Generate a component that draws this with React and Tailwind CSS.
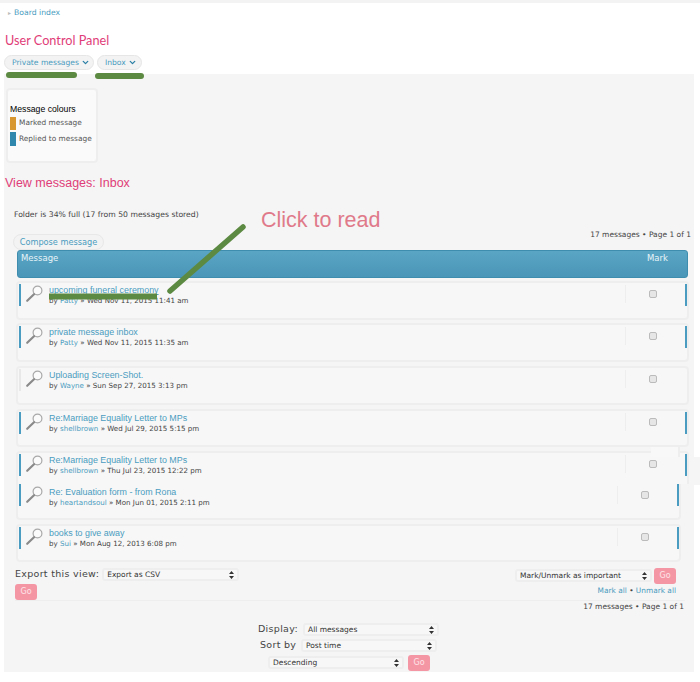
import { ChevronDown } from 'lucide-react';

const rows = [
  { title: 'upcoming funeral ceremony', by: 'Patty', date: 'Wed Nov 11, 2015 11:41 am', gap: 'mt-[3px]', h: 'h-[39px]', underline: true },
  { title: 'private message inbox', by: 'Patty', date: 'Wed Nov 11, 2015 11:35 am', gap: 'mt-[3px]', h: 'h-[39px]' },
  { title: 'Uploading Screen-Shot.', by: 'Wayne', date: 'Sun Sep 27, 2015 3:13 pm', gap: 'mt-[4px]', h: 'h-[39px]', noBar: true },
  { title: 'Re:Marriage Equality Letter to MPs', by: 'shellbrown', date: 'Wed Jul 29, 2015 5:15 pm', gap: 'mt-[4px]', h: 'h-[38px]' },
  { title: 'Re:Marriage Equality Letter to MPs', by: 'shellbrown', date: 'Thu Jul 23, 2015 12:22 pm', gap: 'mt-[4px]', h: 'h-[33px]', cut: true },
  { title: 'Re: Evaluation form - from Rona', by: 'heartandsoul', date: 'Mon Jun 01, 2015 2:11 pm', gap: 'mt-0', h: 'h-[36px]', narrow: true, top: true },
  { title: 'books to give away', by: 'Sui', date: 'Mon Aug 12, 2013 6:08 pm', gap: 'mt-[4px]', h: 'h-[38px]', narrow: true },
];

function Magnifier() {
  return (
    <svg width="20" height="20" viewBox="0 0 20 20" className="shrink-0" aria-hidden>
      <circle cx="12.5" cy="5.5" r="4.4" fill="#fbfbfb" stroke="#a8a8a8" strokeWidth="1.2" />
      <path d="M9 9.2 2.2 15.8" stroke="#8a8a8a" strokeWidth="2.2" strokeLinecap="round" />
    </svg>
  );
}

function Select({ label, className }) {
  return (
    <div className={`flex items-center justify-between h-[13px] pl-[3px] pr-[3px] rounded-[3px] border-2 border-[#eeeeee] bg-[#f7f7f7] text-[7.5px] leading-none text-[#333] ${className}`}>
      <span>{label}</span>
      <svg width="5" height="8" viewBox="0 0 5 8" aria-hidden>
        <path d="M2.5 0 5 3H0ZM2.5 8 0 5h5Z" fill="#333" />
      </svg>
    </div>
  );
}

function Go({ className }) {
  return (
    <div className={`flex items-center justify-center w-[22px] h-[16px] rounded-[3px] bg-[#f596a5] text-[8px] text-[#fde4e8] ${className}`}>Go</div>
  );
}

function Row({ row }) {
  return (
    <div className={`relative ${row.gap} ${row.h} ${row.narrow ? 'w-[665px]' : 'w-[673px]'} ${row.cut ? 'rounded-t-[4px] border-b-0' : row.top ? 'rounded-b-[4px] border-t-0' : 'rounded-[4px]'} border-2 border-[#eeeeee] bg-[#f7f7f7] flex`}>
      <div className={`ml-[1px] ${row.top ? 'mt-0' : 'mt-[1px]'} h-[22px] w-[2px] shrink-0 ${row.noBar ? 'bg-[#e8e8e8] w-[1px]' : 'bg-[#4a9cc0]'}`} />
      <div className="ml-[4px] mt-[2px]"><Magnifier /></div>
      <div className={`ml-[4px] ${row.top ? 'mt-[3px]' : 'mt-[2px]'} flex-1`}>
        <div className={`text-[8.9px] leading-[11px] text-[#4a9cc0] font-['Liberation_Sans',sans-serif] ${row.underline ? 'underline' : ''}`}>{row.title}</div>
        <div className="text-[7.1px] leading-[9px] text-[#444]">
          by <span className="text-[#4a9cc0]">{row.by}</span> » {row.date}
        </div>
      </div>
      <div className="w-[60px] flex shrink-0">
        <div className="mt-[2px] h-[18px] w-px bg-[#eeeeee]" />
        <div className="ml-[23px] mt-[7px] h-[8px] w-[8px] rounded-[2px] border border-[#bbbbbb] bg-[#e6e6e6]" />
      </div>
      <div className={`${row.top ? 'mt-0' : 'mt-[1px]'} h-[22px] w-[2px] shrink-0 ${row.noBar ? 'bg-transparent' : 'bg-[#4a9cc0]'}`} />
    </div>
  );
}

export default function App() {
  return (
    <div className="relative w-[700px] h-[682px] overflow-hidden bg-white font-['DejaVu_Sans',sans-serif]">
      <div className="h-[3px] bg-[#f3f3f3]" />
      <div className="mt-[4px] pl-[8px] h-[11px] flex items-center gap-[3px] text-[7.7px] text-[#4a9cc0]">
        <span className="text-[6px] text-[#bbb]">▸</span>Board index
      </div>
      <h1 className="mt-[13px] pl-[5px] text-[12.7px] leading-[18px] text-[#df3d78] font-['Lato',sans-serif]">User Control Panel</h1>
      <div className="mt-[6px] pl-[4px] flex gap-[3px]">
        <div className="h-[15px] w-[90px] flex items-center pl-[7px] gap-[2px] rounded-full border border-[#e6e6e6] bg-[#f3f3f3] text-[7.6px] text-[#4a9cc0]">
          Private messages <ChevronDown size={9} strokeWidth={3.5} className="text-[#2a7fa5]" />
        </div>
        <div className="h-[15px] w-[45px] flex items-center pl-[7px] gap-[2px] rounded-full border border-[#e6e6e6] bg-[#f3f3f3] text-[7.6px] text-[#4a9cc0]">
          Inbox <ChevronDown size={9} strokeWidth={3.5} className="text-[#2a7fa5]" />
        </div>
      </div>

      <div className="mt-[4px] ml-[4px] w-[690px] h-[598px] bg-[#f5f5f5] overflow-hidden">
        <div className="mt-[14px] ml-[2px] w-[92px] h-[75px] rounded-[4px] border-2 border-[#eeeeee] bg-[#fafafa] pl-[2px] pt-[14px]">
          <div className="text-[8.7px] leading-[11px] text-black font-['Liberation_Sans',sans-serif]">Message colours</div>
          <div className="mt-[1px] flex items-center gap-[3px] text-[7.4px] text-[#555] h-[14px] whitespace-nowrap">
            <span className="w-[6px] h-[13px] bg-[#d8972f]" />Marked message
          </div>
          <div className="mt-[2px] flex items-center gap-[3px] text-[7.4px] text-[#555] h-[14px] whitespace-nowrap">
            <span className="w-[6px] h-[14px] bg-[#2f87ad]" />Replied to message
          </div>
        </div>

        <h2 className="mt-[12px] ml-[1px] text-[12.5px] leading-[16px] text-[#df3d78] font-['Liberation_Sans',sans-serif]">View messages: Inbox</h2>

        <div className="mt-[18px] ml-[10px] text-[7.7px] leading-[11px] text-[#444]">Folder is 34% full (17 from 50 messages stored)</div>

        <div className="mt-[13px] flex items-start justify-between h-[16px]">
          <div className="mt-[1px] ml-[9px] w-[91px] h-[16px] flex items-center justify-center rounded-full border border-[#e8e8e8] bg-[#f3f3f3] text-[8.2px] text-[#4a9cc0]">Compose message</div>
          <div className="mr-[3px] -mt-[4px] text-[7.5px] leading-[11px] text-[#444]">17 messages • Page 1 of 1</div>
        </div>

        <div className="mt-[1px] ml-[13px] w-[671px] h-[28px] rounded-[3px] border border-[#3f8dae] bg-gradient-to-b from-[#5aa5c4] to-[#4a96b8] flex justify-between px-[3px] pt-[2px] text-[8.5px] leading-[11px] text-[#e8f4f8]">
          <span>Message</span>
          <span className="mr-[16px]">Mark</span>
        </div>

        <div className="ml-[12px]">
          {rows.map((row) => <Row key={row.date} row={row} />)}
        </div>

        <div className="mt-[6px] ml-[11px] mr-[18px] flex justify-between h-[17px]">
          <div className="flex items-center h-[13px] gap-[3px]">
            <span className="text-[9.5px] text-[#444] tracking-[0.3px]">Export this view:</span>
            <Select label="Export as CSV" className="w-[137px]" />
          </div>
          <div className="flex items-start gap-[2px]">
            <Select label="Mark/Unmark as important" className="w-[137px] mt-[1px]" />
            <Go />
          </div>
        </div>
        <div className="ml-[11px] mr-[18px] flex justify-between h-[15px]">
          <Go className="-mt-[1px]" />
          <div className="text-[7.4px] leading-[11px] text-[#4a9cc0]">Mark all <span className="text-[#444]">•</span> Unmark all</div>
        </div>
        <div className="ml-[11px] mr-[9px] h-[1px] bg-[#eeeeee]" />
        <div className="mr-[10px] text-right text-[7.5px] leading-[11px] text-[#444]">17 messages • Page 1 of 1</div>

        <div className="mt-[11px] ml-[254px] flex items-center h-[13px]">
          <span className="w-[45px] text-[9.5px] text-[#444] tracking-[0.3px]">Display:</span>
          <Select label="All messages" className="w-[136px]" />
        </div>
        <div className="mt-[3px] ml-[256px] flex items-center h-[13px]">
          <span className="w-[41px] text-[9.5px] text-[#444] tracking-[0.3px]">Sort by</span>
          <Select label="Post time" className="w-[136px]" />
        </div>
        <div className="mt-[4px] ml-[264px] flex items-center h-[13px] gap-[4px]">
          <Select label="Descending" className="w-[136px]" />
          <Go />
        </div>
      </div>

      {/* screenshot seams around the fifth row */}
      <div className="absolute left-[651px] top-[447px] w-[29px] h-[10px] bg-[#f8f8f8]" />
      <div className="absolute left-[678px] top-[447px] w-[2px] h-[10px] bg-[#eeeeee]" />
      <div className="absolute left-[694px] top-[457px] w-[6px] h-[28px] bg-[#f5f5f5]" />

      <div className="absolute left-[261px] top-[207px] text-[21.5px] leading-[26px] text-[#e07a8a] font-['Liberation_Sans',sans-serif]">Click to read</div>
      <svg className="absolute inset-0 pointer-events-none" width="700" height="682" aria-hidden>
        <path d="M9 75H74" stroke="#5d8a42" strokeWidth="6" strokeLinecap="round" />
        <path d="M98 76H141" stroke="#5d8a42" strokeWidth="6" strokeLinecap="round" />
        <path d="M49 296.5H157" stroke="#5d8a42" strokeWidth="6" />
        <path d="M243 227 170 291" stroke="#5d8a42" strokeWidth="5.5" fill="none" strokeLinecap="round" />
      </svg>
    </div>
  );
}
